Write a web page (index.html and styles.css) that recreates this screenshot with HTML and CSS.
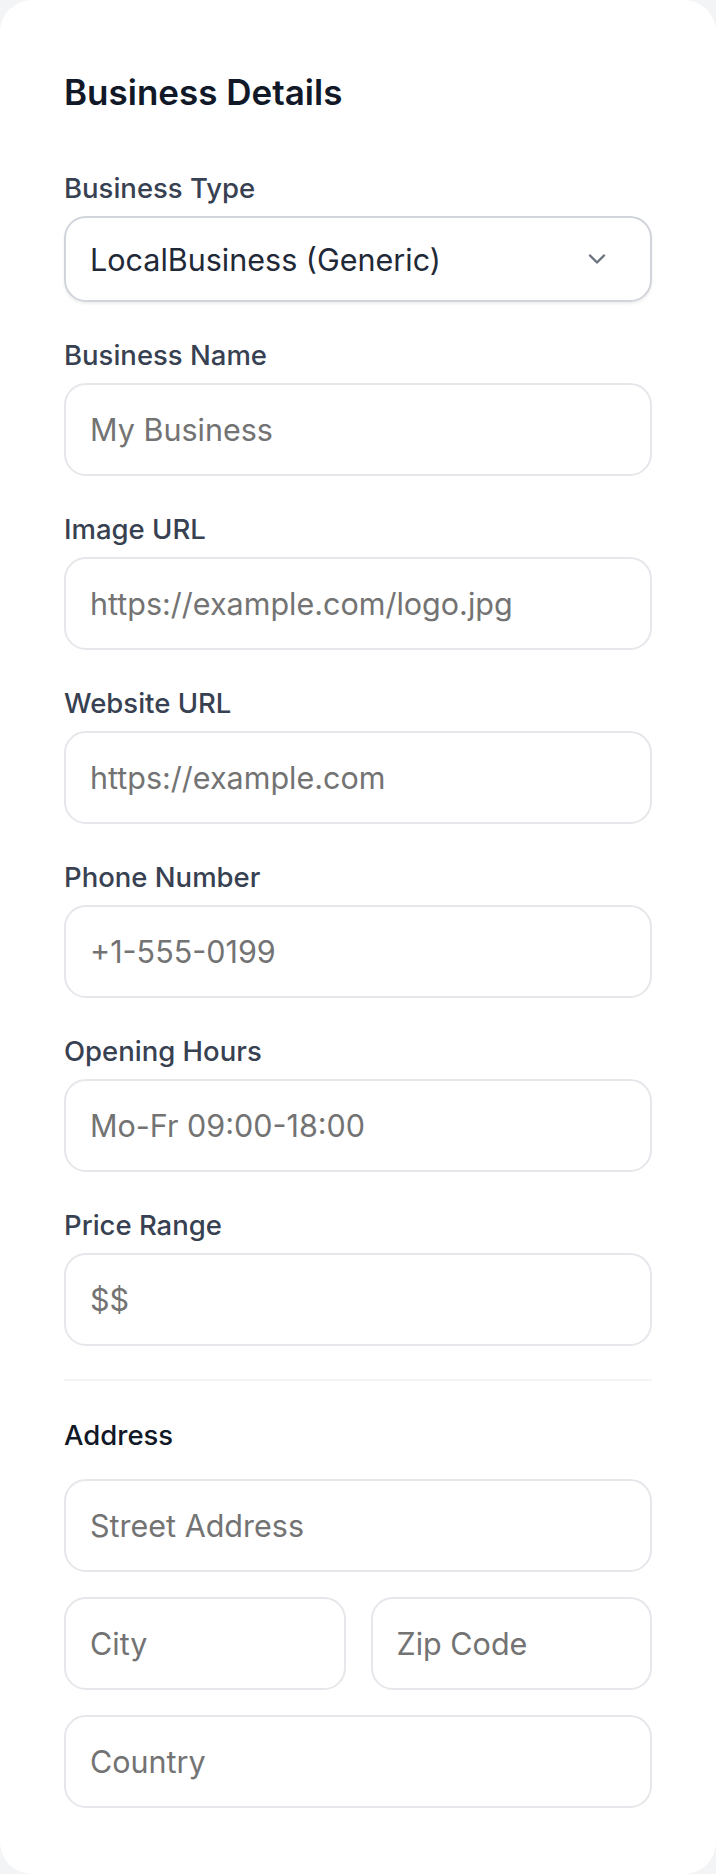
FILE: index.html
```html
<!DOCTYPE html>
<html>
<head>
    <title>Business Details</title>
    <meta charset="UTF-8">
    <link rel="stylesheet" href="styles.css">
</head>
<body>
    <div class="card">
        <h2 class="card-title">Business Details</h2>

        <div class="fields">
            <div class="field">
                <label class="field-label" for="businessType">Business Type</label>
                <div class="select-wrap">
                    <select id="businessType" class="select">
                        <option>LocalBusiness (Generic)</option>
                        <option>Restaurant</option>
                        <option>Store</option>
                        <option>ProfessionalService</option>
                    </select>
                    <svg class="select-icon" width="18" height="12" viewBox="0 0 18 12" fill="none">
                        <path d="M2 2.5l7 7 7-7" stroke="currentColor" stroke-width="2.4" stroke-linecap="round" stroke-linejoin="round"/>
                    </svg>
                </div>
            </div>

            <div class="field">
                <label class="field-label" for="businessName">Business Name</label>
                <input type="text" id="businessName" class="input" placeholder="My Business">
            </div>

            <div class="field">
                <label class="field-label" for="imageUrl">Image URL</label>
                <input type="text" id="imageUrl" class="input" placeholder="https://example.com/logo.jpg">
            </div>

            <div class="field">
                <label class="field-label" for="websiteUrl">Website URL</label>
                <input type="text" id="websiteUrl" class="input" placeholder="https://example.com">
            </div>

            <div class="field">
                <label class="field-label" for="phone">Phone Number</label>
                <input type="text" id="phone" class="input" placeholder="+1-555-0199">
            </div>

            <div class="field">
                <label class="field-label" for="hours">Opening Hours</label>
                <input type="text" id="hours" class="input" placeholder="Mo-Fr 09:00-18:00">
            </div>

            <div class="field">
                <label class="field-label" for="priceRange">Price Range</label>
                <input type="text" id="priceRange" class="input" placeholder="$$">
            </div>
        </div>

        <div class="address">
            <h3 class="address-title">Address</h3>
            <div class="address-fields">
                <input type="text" class="input" placeholder="Street Address">
                <div class="address-row">
                    <input type="text" class="input" placeholder="City">
                    <input type="text" class="input" placeholder="Zip Code">
                </div>
                <input type="text" class="input" placeholder="Country">
            </div>
        </div>
    </div>
</body>
</html>
```

FILE: styles.css
```css
body {
    font-family: Inter, 'Noto Sans', sans-serif;
    margin: 0;
    background-color: #f3f4f6;
    color: #111827;
}

.card {
    background: white;
    border-radius: 32px;
    padding: 64px 64px 66px;
}

.card-title {
    margin: 0 0 48px;
    font-size: 35px;
    line-height: 56px;
    font-weight: 600;
    color: #111827;
}

.fields {
    display: flex;
    flex-direction: column;
    gap: 33px;
}

.field-label {
    display: block;
    margin-bottom: 8px;
    font-size: 27.5px;
    line-height: 40px;
    font-weight: 500;
    color: #374151;
}

.select-wrap {
    position: relative;
}

.select {
    display: block;
    width: 100%;
    height: 86px;
    box-sizing: border-box;
    padding: 0 80px 0 24px;
    border: 2px solid #d1d5db;
    border-radius: 22px;
    background: white;
    box-shadow: 0 2px 3px rgba(0,0,0,0.07);
    font-family: inherit;
    font-size: 30.5px;
    color: #1f2937;
    appearance: none;
    -webkit-appearance: none;
    outline: none;
}

.select-icon {
    position: absolute;
    right: 46px;
    top: 50%;
    margin-top: -6px;
    color: #6b7280;
    pointer-events: none;
}

.input {
    display: block;
    width: 100%;
    height: 93px;
    box-sizing: border-box;
    padding: 0 24px;
    border: 2px solid #e5e7eb;
    border-radius: 22px;
    background: white;
    font-family: inherit;
    font-size: 30.5px;
    color: #1f2937;
    outline: none;
}

.input::placeholder {
    color: #737373;
}

.address {
    margin-top: 33px;
    padding-top: 34px;
    border-top: 2px solid #f3f4f6;
}

.address-title {
    margin: 0 0 24px;
    font-size: 27.5px;
    line-height: 40px;
    font-weight: 500;
    color: #111827;
}

.address-fields {
    display: flex;
    flex-direction: column;
    gap: 25px;
}

.address-row {
    display: grid;
    grid-template-columns: 1fr 1fr;
    gap: 25px;
}
```
